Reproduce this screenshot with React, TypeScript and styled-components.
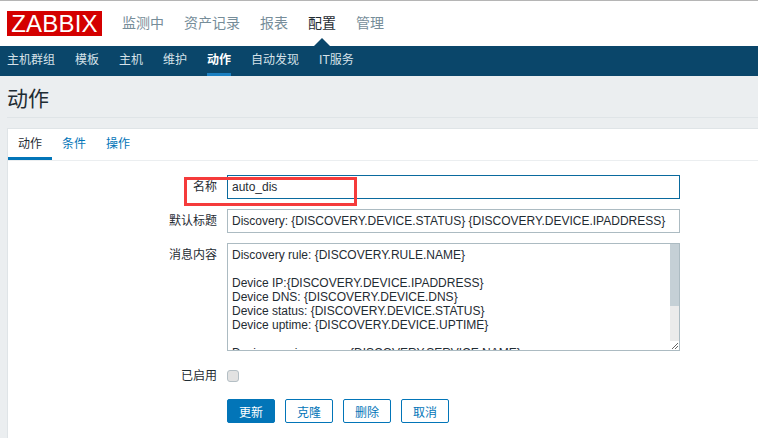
import React from 'react';
import styled, { createGlobalStyle } from 'styled-components';

const GlobalStyle = createGlobalStyle`
  html, body {
    margin: 0;
    padding: 0;
    background: #fff;
    overflow: hidden;
  }
  body {
    font-family: "Liberation Sans", "Noto Sans CJK SC", sans-serif;
    font-size: 12px;
    color: #1f2c33;
  }
`;

const topLinks = ['监测中', '资产记录', '报表', '配置', '管理'];
const subLinks = ['主机群组', '模板', '主机', '维护', '动作', '自动发现', 'IT服务'];
const tabs = ['动作', '条件', '操作'];
const messageLines = [
  'Discovery rule: {DISCOVERY.RULE.NAME}',
  '',
  'Device IP:{DISCOVERY.DEVICE.IPADDRESS}',
  'Device DNS: {DISCOVERY.DEVICE.DNS}',
  'Device status: {DISCOVERY.DEVICE.STATUS}',
  'Device uptime: {DISCOVERY.DEVICE.UPTIME}',
  '',
  'Device service name: {DISCOVERY.SERVICE.NAME}',
];

export default function App() {
  return (
    <Page>
      <GlobalStyle />
      <TopBar>
        <Logo>ZABBIX</Logo>
        <TopNav>
          {topLinks.map((link) => (
            <TopLink key={link} $active={link === '配置'}>{link}</TopLink>
          ))}
        </TopNav>
      </TopBar>
      <SubBar>
        {subLinks.map((link) => (
          <SubLink key={link} $active={link === '动作'}>{link}</SubLink>
        ))}
      </SubBar>
      <Content>
        <Header>
          <Title>动作</Title>
        </Header>
        <Panel>
          <TabRow>
            {tabs.map((tab) => (
              <Tab key={tab} $active={tab === '动作'}>{tab}</Tab>
            ))}
          </TabRow>
          <Form>
            <Row $mb={10}>
              <Label>名称</Label>
              <TextInput $focused defaultValue="auto_dis" />
            </Row>
            <Row $mb={10}>
              <Label>默认标题</Label>
              <TextInput defaultValue="Discovery: {DISCOVERY.DEVICE.STATUS} {DISCOVERY.DEVICE.IPADDRESS}" />
            </Row>
            <Row $mb={13}>
              <Label>消息内容</Label>
              <MessageBox>
                <MessageText>
                  {messageLines.map((line, i) => (
                    <MessageLine key={i}>{line}</MessageLine>
                  ))}
                </MessageText>
                <ScrollTrack>
                  <ScrollThumb />
                  <ResizeGrip viewBox="0 0 9 9">
                    <path d="M8 2 L2 8 M8 5 L5 8" stroke="#666" strokeWidth="1" fill="none" />
                  </ResizeGrip>
                </ScrollTrack>
              </MessageBox>
            </Row>
            <Row $mb={11}>
              <Label>已启用</Label>
              <Check />
            </Row>
            <Row>
              <Spacer />
              <Buttons>
                <Button $primary>更新</Button>
                <Button>克隆</Button>
                <Button>删除</Button>
                <Button>取消</Button>
              </Buttons>
            </Row>
          </Form>
          <Highlight />
        </Panel>
      </Content>
    </Page>
  );
}

const Page = styled.div`
  width: 758px;
  height: 438px;
  overflow: hidden;
  border-top: 1px solid #b5b5b5;
  box-sizing: border-box;
`;

const TopBar = styled.div`
  height: 45px;
  display: flex;
  align-items: flex-start;
  padding-left: 7px;
  background: #fff;
`;

const Logo = styled.div`
  width: 95px;
  height: 25px;
  margin-top: 10px;
  background: #d40000;
  color: #fff;
  font-size: 24px;
  line-height: 25px;
  text-align: center;
  letter-spacing: 0.2px;
`;

const TopNav = styled.nav`
  display: flex;
  gap: 20px;
  margin-left: 20px;
  padding-top: 12px;
`;

const TopLink = styled.span<{ $active?: boolean }>`
  position: relative;
  font-size: 14px;
  line-height: 20px;
  color: ${({ $active }) => ($active ? '#1f2c33' : '#768d99')};

  ${({ $active }) =>
    $active &&
    `
    &::after {
      content: '';
      position: absolute;
      left: 50%;
      top: 25px;
      margin-left: -8px;
      border-left: 8px solid transparent;
      border-right: 8px solid transparent;
      border-bottom: 8px solid #0a466a;
    }
  `}
`;

const SubBar = styled.div`
  height: 30px;
  display: flex;
  gap: 20px;
  padding-left: 7px;
  background: #0a466a;
`;

const SubLink = styled.span<{ $active?: boolean }>`
  height: 27px;
  line-height: 29px;
  font-size: 12px;
  color: ${({ $active }) => ($active ? '#fff' : '#d6e2e9')};
  font-weight: ${({ $active }) => ($active ? 'bold' : 'normal')};
  border-bottom: 3px solid ${({ $active }) => ($active ? '#1a7fc1' : 'transparent')};
`;

const Content = styled.div`
  background: #ebeef0;
  height: 362px;
  padding: 0 0 0 7px;
`;

const Header = styled.div`
  height: 41px;
  border-bottom: 1px solid #dfe4e7;
  display: flex;
  align-items: center;
`;

const Title = styled.h1`
  margin: 0;
  font-size: 21px;
  font-weight: normal;
  color: #1f2c33;
`;

const Panel = styled.div`
  position: relative;
  margin-top: 10px;
  height: 320px;
  background: #fff;
  border-top: 1px solid #dfe4e7;
  border-left: 1px solid #dfe4e7;
`;

const TabRow = styled.div`
  display: flex;
  height: 31px;
  border-bottom: 1px solid #ebeef0;
`;

const Tab = styled.span<{ $active?: boolean }>`
  width: 44px;
  height: 28px;
  line-height: 30px;
  text-align: center;
  font-size: 12px;
  color: ${({ $active }) => ($active ? '#1f2c33' : '#0275b8')};
  border-bottom: 3px solid ${({ $active }) => ($active ? '#0275b8' : 'transparent')};
`;

const Form = styled.div`
  padding: 14px 0 0 0;
`;

const Row = styled.div<{ $mb?: number }>`
  display: flex;
  align-items: flex-start;
  margin-bottom: ${({ $mb }) => $mb ?? 0}px;
`;

const Label = styled.label`
  width: 209px;
  padding-right: 10px;
  box-sizing: content-box;
  text-align: right;
  line-height: 24px;
  font-size: 12px;
  color: #1f2c33;
`;

const Spacer = styled.div`
  width: 219px;
`;

const TextInput = styled.input<{ $focused?: boolean }>`
  width: 453px;
  height: 24px;
  box-sizing: border-box;
  padding: 0 4px;
  font-family: inherit;
  font-size: 12px;
  color: #1f2c33;
  background: #fff;
  border: 1px solid ${({ $focused }) => ($focused ? '#0a6a9e' : '#acbbc2')};
  outline: none;
`;

const MessageBox = styled.div`
  width: 453px;
  height: 108px;
  box-sizing: border-box;
  display: flex;
  border: 1px solid #acbbc2;
  overflow: hidden;
`;

const MessageText = styled.div`
  flex: 1;
  padding: 4px 4px 0;
  overflow: hidden;
`;

const MessageLine = styled.div`
  height: 14px;
  line-height: 14px;
  white-space: pre;
`;

const ScrollTrack = styled.div`
  position: relative;
  width: 9px;
  background: #ebebeb;
`;

const ScrollThumb = styled.div`
  height: 62px;
  background: #c5d0d6;
`;

const ResizeGrip = styled.svg`
  position: absolute;
  right: 0;
  bottom: 0;
  width: 9px;
  height: 9px;
  background: #fff;
`;

const Check = styled.span`
  width: 10px;
  height: 10px;
  margin: 6px 0 0 0;
  background: #e2e2e2;
  border: 1px solid #b4bfc5;
  border-radius: 3px;
`;

const Buttons = styled.div`
  display: flex;
  gap: 10px;
`;

const Button = styled.button<{ $primary?: boolean }>`
  width: 48px;
  height: 24px;
  padding: 0;
  box-sizing: border-box;
  font-family: inherit;
  font-size: 12px;
  color: ${({ $primary }) => ($primary ? '#fff' : '#0275b8')};
  background: ${({ $primary }) => ($primary ? '#0275b8' : '#fff')};
  border: 1px solid #0275b8;
  border-radius: 2px;
`;

const Highlight = styled.div`
  position: absolute;
  left: 176px;
  top: 48px;
  width: 167px;
  height: 23px;
  border: 3px solid #f53b3b;
  pointer-events: none;
`;
